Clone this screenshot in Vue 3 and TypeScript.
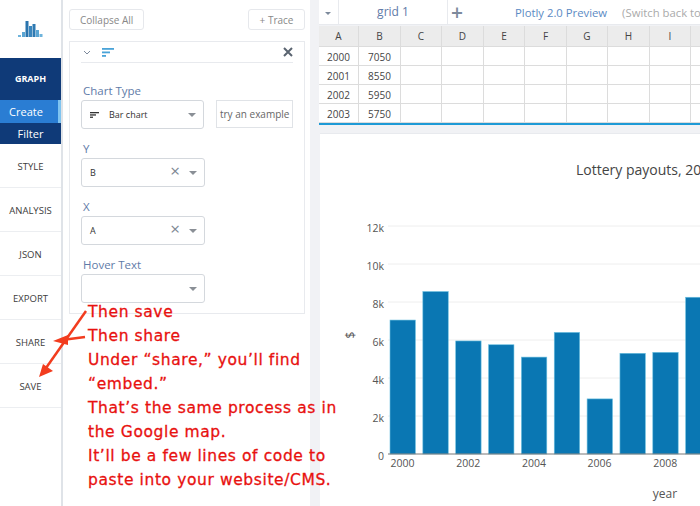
<script setup lang="ts">
const navItems = ['STYLE', 'ANALYSIS', 'JSON', 'EXPORT', 'SHARE', 'SAVE']
const columns = ['A', 'B', 'C', 'D', 'E', 'F', 'G', 'H', 'I', 'J']
const rows = [
  ['2000', '7050'],
  ['2001', '8550'],
  ['2002', '5950'],
  ['2003', '5750'],
]
const notes = [
  'Then save',
  'Then share',
  'Under “share,” you’ll find',
  '“embed.”',
  'That’s the same process as in',
  'the Google map.',
  'It’ll be a few lines of code to',
  'paste into your website/CMS.',
]

const values = [7050, 8550, 5950, 5750, 5100, 6400, 2900, 5300, 5350, 8250]
const baseY = 454
const scale = 38 / 2000
const bars = values.map((v, i) => ({
  x: 390 + i * 32.85 - 320,
  y: baseY - v * scale - 133,
  h: v * scale,
}))
const ticks = ['0', '2k', '4k', '6k', '8k', '10k', '12k'].map((label, i) => ({
  label,
  y: baseY - i * 38 - 133,
}))
const years = [2000, 2002, 2004, 2006, 2008].map((year, i) => ({
  year,
  x: 402.5 + i * 65.7 - 320,
}))
// x, height, colour of each logo bar
const logoBars: [number, number, string][] = [
  [0, 2, '#6fb4dc'],
  [4, 5, '#5aa5d3'],
  [7.5, 16, '#2a74ad'],
  [11, 11, '#3a86bd'],
  [14.5, 13, '#2f7ab2'],
  [18, 7, '#5aa5d3'],
  [21.5, 3, '#6fb4dc'],
]
</script>

<template>
  <div class="app">
    <nav class="sidebar">
      <div class="logo">
        <svg width="25" height="16" viewBox="0 0 25 16">
          <rect
            v-for="b in logoBars"
            :key="b[0]"
            :x="b[0]"
            :y="16 - b[1]"
            width="3"
            :height="b[1]"
            :fill="b[2]"
          />
        </svg>
      </div>
      <div class="graph-group">
        <div class="graph-title">GRAPH</div>
        <div class="sub-item active">Create</div>
        <div class="sub-item">Filter</div>
      </div>
      <div v-for="item in navItems" :key="item" class="nav-item">{{ item }}</div>
    </nav>

    <section class="panel">
      <div class="panel-actions">
        <button class="btn">Collapse All</button>
        <button class="btn trace">+ Trace</button>
      </div>
      <div class="trace-card">
        <div class="trace-head">
          <svg class="chevron" width="8" height="5" viewBox="0 0 8 5">
            <path d="M1 1l3 3 3-3" fill="none" stroke="#7d8a9c" stroke-width="1" />
          </svg>
          <svg class="bars-icon" width="12" height="9" viewBox="0 0 12 9">
            <rect width="12" height="1.8" fill="#4aa3d8" />
            <rect y="3.5" width="8" height="1.8" fill="#4aa3d8" />
            <rect y="7" width="4" height="1.8" fill="#4aa3d8" />
          </svg>
          <svg class="close" width="10" height="10" viewBox="0 0 10 10">
            <path d="M1 1l8 8M9 1l-8 8" stroke="#5a6470" stroke-width="2" />
          </svg>
        </div>

        <label class="field-label first">Chart Type</label>
        <div class="type-row">
          <div class="select">
            <svg class="type-icon" width="9" height="6" viewBox="0 0 9 6">
              <rect width="9" height="1.3" fill="#333" />
              <rect y="2.3" width="6" height="1.3" fill="#333" />
              <rect y="4.6" width="3" height="1.3" fill="#333" />
            </svg>
            <span class="value">Bar chart</span>
            <span class="caret"></span>
          </div>
          <div class="example">try an example</div>
        </div>

        <label class="field-label">Y</label>
        <div class="select">
          <span class="value">B</span>
          <span class="clear">×</span>
          <span class="caret"></span>
        </div>

        <label class="field-label">X</label>
        <div class="select">
          <span class="value">A</span>
          <span class="clear">×</span>
          <span class="caret"></span>
        </div>

        <label class="field-label">Hover Text</label>
        <div class="select">
          <span class="value"></span>
          <span class="caret"></span>
        </div>
      </div>
    </section>

    <main class="main">
      <div class="tabs">
        <span class="tab-arrow"></span>
        <div class="tab">grid 1</div>
        <span class="plus">+</span>
        <span class="preview">Plotly 2.0 Preview</span>
        <span class="switch">(Switch back to</span>
      </div>

      <div class="grid">
        <div class="grid-row head">
          <div v-for="c in columns" :key="c" class="cell">{{ c }}</div>
        </div>
        <div v-for="row in rows" :key="row[0]" class="grid-row">
          <div v-for="(c, i) in columns" :key="c" class="cell">{{ row[i] }}</div>
        </div>
      </div>

      <div class="chart-card">
        <svg class="chart" width="380" height="373" viewBox="0 0 380 373">
          <text x="256" y="42" class="title">Lottery payouts, 2000-2016</text>
          <line
            v-for="t in ticks.slice(1)"
            :key="t.label"
            x1="68"
            x2="380"
            :y1="t.y"
            :y2="t.y"
            stroke="#eeeeee"
          />
          <text
            v-for="t in ticks"
            :key="'l' + t.label"
            x="64"
            :y="t.y + 5.5"
            text-anchor="end"
            class="tick"
          >{{ t.label }}</text>
          <rect
            v-for="b in bars"
            :key="b.x"
            :x="b.x"
            :y="b.y"
            width="25.4"
            :height="b.h"
            fill="#0a77b3"
            stroke="#6cc0e0"
            stroke-width="0.6"
          />
          <line x1="68" x2="380" :y1="321" :y2="321" stroke="#777" stroke-width="1" />
          <text
            v-for="y in years"
            :key="y.year"
            :x="y.x"
            y="334"
            text-anchor="middle"
            class="tick"
          >{{ y.year }}</text>
          <text x="345" y="365" text-anchor="middle" class="axis">year</text>
          <text x="0" y="0" class="axis" transform="translate(35 202) rotate(-90)" text-anchor="middle">$</text>
        </svg>
      </div>
    </main>

    <svg class="arrows" width="100" height="100" viewBox="0 0 100 100">
      <path d="M86 11L46 68" stroke="#f23c1e" stroke-width="2.5" fill="none" />
      <path d="M39 77L43 64L53 71Z" fill="#f23c1e" />
      <path d="M85 37L62 40" stroke="#f23c1e" stroke-width="2.5" fill="none" />
      <path d="M53 41L68 35L68 45Z" fill="#f23c1e" />
    </svg>
    <div class="notes">
      <div v-for="line in notes" :key="line">{{ line }}</div>
    </div>
  </div>
</template>

<style>
html,
body {
  margin: 0;
  background: #fff;
}
</style>

<style scoped>
.app {
  position: relative;
  display: flex;
  width: 700px;
  height: 506px;
  overflow: hidden;
  background: #fff;
  font-family: "Open Sans", "Liberation Sans", sans-serif;
  color: #444;
}

.sidebar {
  flex: none;
  width: 61px;
  border-right: 2px solid #dfe3e8;
}

.logo {
  height: 58px;
  display: flex;
  align-items: center;
  justify-content: center;
}

.graph-group {
  background: #0f3a78;
  color: #fff;
  text-align: center;
  height: 86px;
}

.graph-title {
  height: 42px;
  line-height: 41px;
  font-size: 9px;
  font-weight: 700;
}

.sub-item {
  height: 21px;
  line-height: 21px;
  font-size: 11px;
}

.sub-item.active {
  height: 23px;
  line-height: 23px;
  background: #2a7dd3;
  border-right: 3px solid #7fc4f0;
  padding-right: 6px;
  box-sizing: border-box;
}

.nav-item {
  height: 44px;
  line-height: 45px;
  font-size: 9.5px;
  text-align: center;
  color: #3c3c3c;
  border-bottom: 1px solid #eceef1;
  box-sizing: border-box;
}

.panel {
  flex: none;
  width: 247px;
  box-sizing: border-box;
  padding: 9px 5px 0 6px;
}

.panel-actions {
  display: flex;
  justify-content: space-between;
}

.btn {
  height: 21px;
  padding: 0 10px;
  border: 1px solid #e6e8ec;
  border-radius: 3px;
  background: #fff;
  font: 10px "Open Sans", sans-serif;
  color: #888;
}

.trace {
  width: 57px;
  padding: 0;
}

.trace-card {
  margin-top: 11px;
  height: 273px;
  border: 1px solid #e8eaee;
  box-sizing: border-box;
  padding: 0 11px;
}

.trace-head {
  display: flex;
  align-items: center;
  height: 20px;
  border-bottom: 1px solid #e8eaee;
}

.chevron {
  margin-left: 2px;
}

.bars-icon {
  margin-left: 11px;
}

.close {
  margin-left: auto;
}

.field-label {
  display: block;
  height: 19px;
  line-height: 19px;
  margin-top: 10px;
  padding-left: 2px;
  font-size: 11.5px;
  color: #5f7ba8;
}

.field-label.first {
  margin-top: 19px;
  height: 18px;
  line-height: 18px;
}

.type-row {
  display: flex;
  gap: 12px;
}

.select {
  display: flex;
  align-items: center;
  width: 124px;
  height: 29px;
  box-sizing: border-box;
  padding: 0 7px 0 8px;
  border: 1px solid #d4d8dd;
  border-radius: 3px;
  font-size: 9px;
  color: #333;
}

.type-icon {
  margin-right: 10px;
}

.value {
  flex: 1;
}

.clear {
  margin-right: 9px;
  margin-top: -3px;
  font-size: 17px;
  line-height: 10px;
  color: #7d8793;
}

.caret {
  width: 0;
  height: 0;
  border-left: 4px solid transparent;
  border-right: 4px solid transparent;
  border-top: 4px solid #8a8f96;
}

.example {
  width: 77px;
  height: 28px;
  line-height: 26px;
  box-sizing: border-box;
  border: 1px solid #e0e3e7;
  font-size: 10px;
  text-align: center;
  color: #666;
  white-space: nowrap;
}

.main {
  flex: none;
  width: 390px;
  box-sizing: border-box;
  background: #f1f2f5;
  padding-left: 9px;
  overflow: hidden;
}

.tabs {
  display: flex;
  align-items: center;
  height: 24px;
  background: #fff;
  border-bottom: 1px solid #e8eaee;
  margin-bottom: 1px;
  font-size: 11.3px;
  overflow: hidden;
}

.tab-arrow {
  flex: none;
  width: 0;
  height: 0;
  margin: 3px 7px 0 6px;
  border-left: 3px solid transparent;
  border-right: 3px solid transparent;
  border-top: 3px solid #7d8a9c;
}

.tab {
  flex: none;
  width: 110px;
  height: 24px;
  line-height: 23px;
  text-align: center;
  font-size: 12px;
  color: #5f7ba8;
  border-left: 1px solid #e8eaee;
  border-right: 1px solid #e8eaee;
  box-sizing: border-box;
}

.plus {
  flex: none;
  margin-left: 3px;
  font-size: 21px;
  font-weight: 600;
  line-height: 23px;
  color: #7d8a9c;
}

.preview {
  flex: none;
  margin-left: 52px;
  color: #5b8ac4;
  white-space: nowrap;
}

.switch {
  flex: none;
  margin-left: 15px;
  color: #aaa;
  white-space: nowrap;
}

.grid {
  background: #fff;
  border-bottom: 2px solid #1e9ad6;
  width: 381px;
}

.grid-row {
  display: grid;
  grid-template-columns: 40px 42px 41px 42px 41px 42px 41px 42px 41px 41px;
  grid-template-rows: 19px;
  height: 19px;
}

.grid-row.head {
  grid-template-rows: 21px;
  height: 21px;
  background: #ececec;
}

.cell {
  box-sizing: border-box;
  overflow: hidden;
  border-right: 1px solid #dcdcdc;
  border-bottom: 1px solid #dcdcdc;
  font-size: 10px;
  line-height: 20px;
  text-align: center;
  color: #444;
}

.chart-card {
  margin: 8px 0 0 1px;
  height: 373px;
  background: #fff;
  border-top: 1px solid #e8eaee;
  box-sizing: border-box;
}

.chart {
  display: block;
  margin-top: -1px;
}

.title {
  font: 14px "Open Sans", sans-serif;
  fill: #444;
}

.tick {
  font: 10.5px "Open Sans", sans-serif;
  fill: #555;
}

.axis {
  font: 12px "Open Sans", sans-serif;
  fill: #555;
}

.arrows {
  position: absolute;
  left: 0;
  top: 300px;
}

.notes {
  position: absolute;
  left: 88px;
  top: 300px;
  font-family: "DejaVu Sans", sans-serif;
  font-size: 15.5px;
  letter-spacing: 0.6px;
  line-height: 24px;
  color: #e8110f;
  white-space: nowrap;
  -webkit-text-stroke: 0.3px #e8110f;
}
</style>
